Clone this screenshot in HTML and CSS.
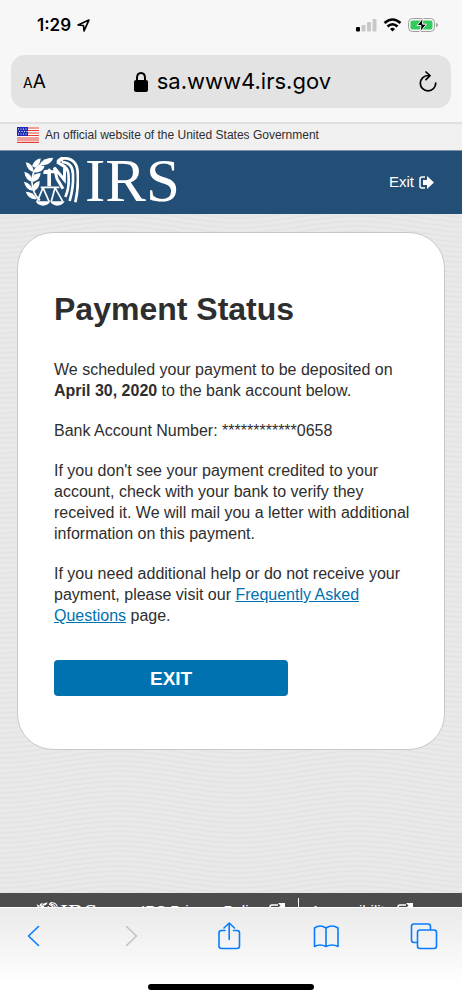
FILE: index.html
```html
<!DOCTYPE html>
<html lang="en">
<head>
<meta charset="utf-8">
<meta name="viewport" content="width=device-width, initial-scale=1">
<title>Payment Status</title>
<link rel="stylesheet" href="styles.css">
</head>
<body>
<svg class="defs" aria-hidden="true">
  <symbol id="seal" viewBox="0 0 165 147">
    <g fill="#fff">
      <path d="M48 22Q55 3 88 2Q82 21 58 25Z"/>
      <path d="M24 28Q30 8 50 4Q50 22 34 32Z"/>
      <path d="M5 16Q28 20 30 46Q10 42 5 16Z"/>
      <path d="M1 44Q23 48 25 74Q4 70 1 44Z"/>
      <path d="M0 74Q20 77 27 101Q5 99 0 74Z"/>
      <path d="M5 104Q28 104 39 126Q15 130 5 104Z"/>
      <path d="M31 38Q38 24 62 27Q57 46 34 47Z"/>
      <path d="M24 66Q27 48 50 48Q49 68 27 75Z"/>
      <path d="M25 96Q26 76 47 72Q48 92 31 102Z"/>
      <path d="M58 44Q60 37 70 39L76 34L82 40H90V49H81V88H70V51H58Z"/>
      <path d="M35 133H79Q72 146 57 146T35 133Z"/>
      <path d="M78 133H122Q114 146 100 146T78 133Z"/>
      <path d="M97 13Q104 -1 122 1L116 12Q108 11 105 20Z"/>
    </g>
    <g fill="none" stroke="#fff" stroke-width="5">
      <path d="M60 20Q24 30 24 76Q25 109 48 130"/>
      <path d="M50 91H106M57 92L40 133M57 92L75 133M93 92L82 133M93 92L116 133"/>
      <path d="M99 15L122 29L121 69L91 32L99 65L117 95" stroke-width="9"/>
      <path d="M109 4H126Q160 8 161 48Q164 91 154 136" stroke-width="8"/>
      <path d="M113 15Q146 16 147 51Q149 91 137 132" stroke-width="8"/>
      <path d="M122 29Q135 38 134 66Q135 96 124 120" stroke-width="8"/>
    </g>
  </symbol>
  <symbol id="leave" viewBox="0 0 15 13">
    <path d="M6 1H3Q1 1 1 3V10Q1 12 3 12H6" fill="none" stroke="#fff" stroke-width="1.5"/>
    <path d="M4 4H8V0L15 6.500L8 13V9H4Z" fill="#fff"/>
  </symbol>
  <symbol id="external" viewBox="0 0 16 14">
    <path d="M9 2H3Q1 2 1 4V11Q1 13 3 13H10Q12 13 12 11V8" fill="none" stroke="#fff" stroke-width="1.500"/>
    <path d="M9 0H16V7L13.500 4.500L8 10L6 8L11.500 2.500Z" fill="#fff"/>
  </symbol>
</svg>

<div class="browser-top">
  <div class="status">
    <span class="time">1:29</span>
    <svg class="location" viewBox="0 0 12 12"><path d="M1 5.500L11 1L6.500 11L6 6Z" fill="none" stroke="#000" stroke-width="1.500" stroke-linejoin="round"/></svg>
    <svg class="indicators" viewBox="0 0 84 16" role="img" aria-label="Signal, Wi-Fi, battery charging">
      <rect x="1" y="10" width="4" height="4.500" rx="1"/>
      <g fill="#c8c8c8"><rect x="6.500" y="8" width="4" height="6.500" rx="1"/><rect x="12" y="5" width="4" height="9.500" rx="1"/><rect x="17.500" y="2" width="4" height="12.500" rx="1"/></g>
      <path d="M29.500 6Q37.500 -1 45.500 6M32.500 9.500Q37.500 5 42.500 9.500" fill="none" stroke="#000" stroke-width="2.600"/>
      <path d="M35 12Q37.500 9.500 40 12L37.500 14.500Z"/>
      <rect x="53.500" y="1.500" width="26" height="13" rx="4" fill="none" stroke="#a0a0a0"/>
      <rect x="55.500" y="3.500" width="22" height="9" rx="2" fill="#31cc5b"/>
      <path d="M81 6Q83 6 83 8T81 10Z" fill="#a0a0a0"/>
      <path d="M68 1L62 8.500H66L65 15L71.500 7.200H67.500Z" stroke="#f7f7f7" stroke-width="1"/>
    </svg>
  </div>
  <div class="address">
    <button class="text-size" aria-label="Text size"><small>A</small>A</button>
    <div class="host">
      <svg class="lock" viewBox="0 0 14 20"><rect y="8" width="14" height="12" rx="2"/><path d="M3 9V6Q3 1 7 1T11 6V9" fill="none" stroke="#000" stroke-width="2"/></svg>
      <span>sa.www4.irs.gov</span>
    </div>
    <button class="reload" aria-label="Reload"><svg viewBox="0 0 18 22"><path d="M9 4.500A7.700 7.700 0 1 0 16.700 12M7 1L11 4.700L7 8.700" fill="none" stroke="#000" stroke-width="1.700" stroke-linecap="round" stroke-linejoin="round"/></svg></button>
  </div>
</div>

<div class="gov-banner">
  <svg class="flag" viewBox="0 0 22 16">
    <rect width="22" height="16" fill="#fff"/>
    <path d="M0 1H22M0 3.500H22M0 6H22M0 8.500H22M0 11H22M0 13H22M0 15.300H22" stroke="#e23b32" stroke-width="1.200"/>
    <rect width="11" height="9" fill="#1f2bb5"/>
    <path d="M1 2H11M2 4.500H11M1 7H11" stroke="#fff" stroke-dasharray="1 1.500"/>
  </svg>
  <span>An official website of the United States Government</span>
</div>

<header class="site-header">
  <a class="logo" href="#" aria-label="IRS"><svg class="seal"><use href="#seal"/></svg><span>IRS</span></a>
  <a class="leave" href="#">Exit <svg><use href="#leave"/></svg></a>
</header>

<main>
  <section class="card">
    <h1>Payment Status</h1>
    <p>We scheduled your payment to be deposited on <strong>April 30, 2020</strong> to the bank account below.</p>
    <p>Bank Account Number: ************0658</p>
    <p>If you don't see your payment credited to your account, check with your bank to verify they received it. We will mail you a letter with additional information on this payment.</p>
    <p>If you need additional help or do not receive your payment, please visit our <a href="#">Frequently Asked Questions</a> page.</p>
    <button class="exit">EXIT</button>
  </section>
</main>

<footer>
  <div class="footer-logo"><svg><use href="#seal"/></svg><span>IRS</span></div>
  <a href="#">IRS Privacy Policy <svg><use href="#external"/></svg></a>
  <a class="divided" href="#">Accessibility <svg><use href="#external"/></svg></a>
</footer>

<nav class="toolbar" aria-label="Browser">
  <div class="tools">
    <button aria-label="Back"><svg viewBox="0 0 28 28"><path d="M18.500 4.500L8.500 14L18.500 23.500"/></svg></button>
    <button aria-label="Forward" disabled><svg viewBox="0 0 28 28"><path d="M8.500 4.500L18.500 14L8.500 23.500"/></svg></button>
    <button aria-label="Share"><svg viewBox="0 0 28 28"><path d="M10 8.500H6.500Q4 8.500 4 11V24Q4 26.500 6.500 26.500H22Q24.500 26.500 24.500 24V11Q24.500 8.500 22 8.500H18.500M14.200 17.500V1.500M9 6L14.200 1L19.500 6"/></svg></button>
    <button aria-label="Bookmarks"><svg viewBox="0 0 28 28"><path d="M13 6Q7 2 1.500 6V24.500Q7 21.500 13 24.500Q19 21.500 25 24.500V6Q19 2 13 6V24.500"/></svg></button>
    <button aria-label="Tabs"><svg viewBox="0 0 28 28"><path d="M7 20.500H4Q1.500 20.500 1.500 18V4.500Q1.500 2 4 2H18Q20.500 2 20.500 4.500V7.500"/><rect x="7.500" y="8" width="19" height="18.500" rx="2.500"/></svg></button>
  </div>
  <div class="home-bar"></div>
</nav>
</body>
</html>
```
FILE: styles.css
```css
* { box-sizing: border-box; }
body {
  margin: 0;
  min-height: 100vh;
  display: flex;
  flex-direction: column;
  font: 15px/21px "Liberation Sans", Arial, sans-serif;
  color: #2e2e2e;
  background: #f7f7f7;
}
svg { display: block; }
.defs { position: absolute; width: 0; height: 0; }
button { border: 0; padding: 0; background: none; font: inherit; color: inherit; }

.browser-top {
  font-family: Inter, sans-serif;
  color: #000;
  padding: 15px 11px 14px;
  border-bottom: 2px solid #e0e0e0;
}
.status { display: flex; align-items: center; height: 20px; padding: 0 12px 0 26px; }
.time { font-size: 17px; font-weight: 600; }
.location { width: 13px; height: 13px; margin-left: 6px; }
.indicators { width: 84px; height: 16px; margin-left: auto; }
.address {
  display: flex;
  align-items: center;
  justify-content: space-between;
  height: 53px;
  margin-top: 20px;
  padding: 0 14px 0 12px;
  border-radius: 14px;
  background: #e3e3e4;
}
.text-size { font-size: 19px; }
.text-size small { font-size: 14px; }
.host { display: flex; align-items: center; gap: 9px; font-size: 22px; }
.lock { width: 14px; height: 20px; }
.reload svg { width: 18px; height: 22px; }

.gov-banner {
  display: flex;
  align-items: center;
  gap: 6px;
  height: 26px;
  padding: 0 17px 4px;
  font-size: 12px;
  background: #f0f0f0;
}
.flag { width: 22px; height: 16px; }

.site-header {
  display: flex;
  align-items: center;
  justify-content: space-between;
  height: 64px;
  padding: 0 28px 3px 24px;
  background: #234e75;
  border-top: 1px solid #7d93a9;
}
.site-header a { color: #fff; text-decoration: none; }
.logo { display: flex; align-items: center; gap: 6px; font: 61px/60px "Liberation Serif", serif; }
.seal { width: 55px; height: 49px; }
.leave { display: flex; align-items: center; gap: 5px; }
.leave svg { width: 15px; height: 13px; margin-top: 2px; }

main {
  flex: 1;
  padding: 18px 17px;
  background: #e9e9e9 url("data:image/svg+xml,%3Csvg xmlns='http://www.w3.org/2000/svg' width='238' height='5'%3E%3Cpath d='M0 4C40 4 79 -8 119 -8S198 4 238 4M0 9C40 9 79 -3 119 -3S198 9 238 9M0 14C40 14 79 2 119 2S198 14 238 14M0 -1C40 -1 79 -13 119 -13S198 -1 238 -1' fill='none' stroke='%23e3e3e3' stroke-width='1.500'/%3E%3C/svg%3E");
}
.card {
  padding: 58px 24px 53px 36px;
  border: 1px solid #c8c8c8;
  border-radius: 36px;
  background: #fff;
}
h1 { margin: 0 0 32px; font-size: 32px; line-height: 36px; }
p { margin: 0 0 19px; font-size: 16px; }
.card a { color: #0071b0; }
.exit {
  display: block;
  width: 64%;
  height: 36px;
  margin-top: 34px;
  border-radius: 4px;
  background: #0072b0;
  color: #fff;
  font-size: 19px;
  font-weight: bold;
}

footer {
  display: flex;
  height: 14px;
  overflow: hidden;
  padding: 5px 36px 0;
  background: #4c4c4c;
  color: #fff;
}
footer a { display: flex; gap: 5px; padding-top: 2px; color: #fff; text-decoration: none; white-space: nowrap; }
footer a svg { width: 16px; height: 14px; margin-top: 3px; }
.footer-logo { display: flex; gap: 2px; width: 105px; font: 24px/28px "Liberation Serif", serif; }
.footer-logo svg { width: 22px; height: 20px; margin-top: 4px; }
.divided { margin-left: 13px; padding-left: 12px; border-left: 1px solid #fff; }

.toolbar { padding: 14px 0 9px; background: linear-gradient(#eaeaea, #fff 85%); border-top: 1px solid #fff; }
.tools { display: flex; justify-content: space-between; padding: 0 24px 0 20px; }
.tools svg { width: 28px; height: 28px; fill: none; stroke: #087cff; stroke-width: 1.600; stroke-linejoin: round; stroke-linecap: round; }
.tools button:disabled svg { stroke: #c3c3c3; }
.home-bar { width: 36%; height: 6px; margin: 34px auto 0; border-radius: 3px; background: #000; }
```
